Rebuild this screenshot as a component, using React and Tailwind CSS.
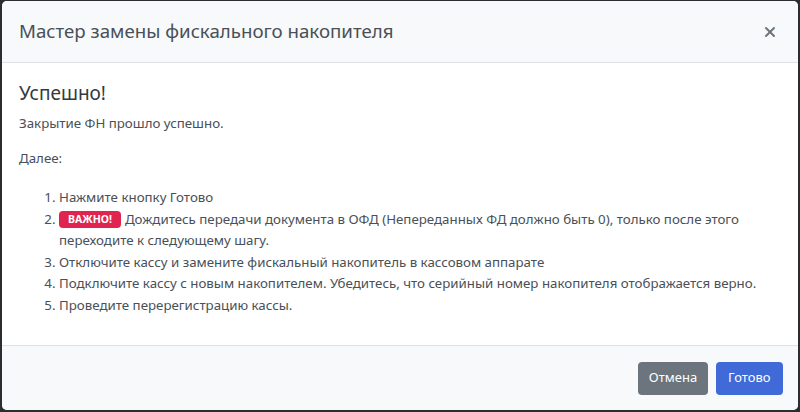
import { X } from "lucide-react";

const steps = [
  { id: 1, text: "Нажмите кнопку Готово" },
  {
    id: 2,
    important: true,
    text: "Дождитесь передачи документа в ОФД (Непереданных ФД должно быть 0), только после этого переходите к следующему шагу.",
  },
  { id: 3, text: "Отключите кассу и замените фискальный накопитель в кассовом аппарате" },
  { id: 4, text: "Подключите кассу с новым накопителем. Убедитесь, что серийный номер накопителя отображается верно." },
  { id: 5, text: "Проведите перерегистрацию кассы." },
];

export default function App() {
  return (
    <div className="h-[412px] w-[800px] bg-[#2b2d30] pl-[2px] pr-[2px] pt-px pb-[2px]" style={{ fontFamily: '"Noto Sans", "Open Sans", sans-serif' }}>
      <div className="flex h-full flex-col overflow-hidden rounded-[5px] bg-white text-[#212529]">
        <div className="flex h-[62px] items-center justify-between border-b border-[#dee2e6] bg-[#f8f9fa] pl-[17px] pr-[18px]">
          <h1 className="text-[18.7px] font-normal text-[#495057]">Мастер замены фискального накопителя</h1>
          <button type="button" className="grid size-5 place-items-center text-[#6c757d]">
            <X size={16} strokeWidth={3} />
          </button>
        </div>
        <div className="flex-1 px-[17px] pt-[18px] text-[13.3px] leading-[21.5px] text-[#495057]">
          <h2 className="text-[19px] leading-[24px] font-normal text-[#343a40]">Успешно!</h2>
          <p className="mt-[8px]">Закрытие ФН прошло успешно.</p>
          <p className="mt-[13px]">Далее:</p>
          <ol className="mt-[18px] list-decimal pl-[40px]">
            {steps.map((step) => (
              <li key={step.id}>
                {step.important && (
                  <span className="mr-[4px] inline-block rounded-[4px] bg-[#e0244f] px-[9px] align-[1px] text-[10.5px] leading-[17px] font-bold text-white">ВАЖНО!</span>
                )}
                {step.text}
              </li>
            ))}
          </ol>
        </div>
        <div className="flex h-[65px] items-center justify-end gap-[8px] border-t border-[#dee2e6] bg-[#f8f9fa] pr-[15px]">
          <button type="button" className="h-[33px] rounded-[4px] bg-[#6c757d] px-[10.5px] text-[13px] text-white">Отмена</button>
          <button type="button" className="h-[33px] rounded-[4px] bg-[#3f6ad8] px-[12.5px] text-[13px] text-white">Готово</button>
        </div>
      </div>
    </div>
  );
}
